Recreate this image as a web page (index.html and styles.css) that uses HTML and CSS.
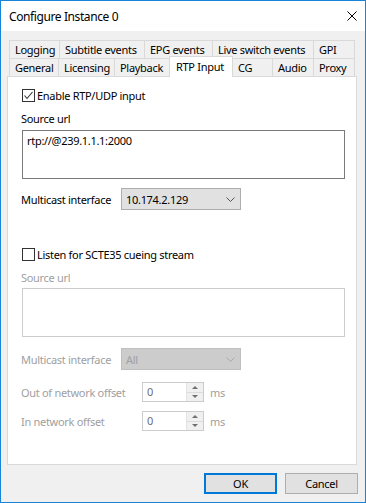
FILE: index.html
```html
<!DOCTYPE html>
<html lang="en">
<head>
  <meta charset="UTF-8">
  <title>Configure Instance 0</title>
  <link rel="stylesheet" href="styles.css">
</head>
<body>
  <div class="window">
    <div class="titlebar">
      <span class="title">Configure Instance 0</span>
      <svg class="close" width="10" height="10" viewBox="0 0 10 10">
        <path d="M0.5 0.5 L9.5 9.5 M9.5 0.5 L0.5 9.5" stroke="#000" stroke-width="1" fill="none"/>
      </svg>
    </div>

    <div class="dialog">
      <div class="tabs">
        <div class="tab-row row-top">
          <div class="tab">Logging</div>
          <div class="tab">Subtitle events</div>
          <div class="tab">EPG events</div>
          <div class="tab">Live switch events</div>
          <div class="tab">GPI</div>
        </div>
        <div class="tab-row row-bottom">
          <div class="tab">General</div>
          <div class="tab">Licensing</div>
          <div class="tab">Playback</div>
          <div class="tab active">RTP Input</div>
          <div class="tab">CG</div>
          <div class="tab">Audio</div>
          <div class="tab">Proxy</div>
        </div>
      </div>

      <div class="panel">
        <div class="check-row">
          <span class="checkbox">
            <svg width="11" height="11" viewBox="0 0 11 11">
              <path d="M1.5 5.5 L4 8.5 L9.5 2" stroke="#333" stroke-width="1.1" fill="none"/>
            </svg>
          </span>
          <span>Enable RTP/UDP input</span>
        </div>

        <div class="field-label url-label">Source url</div>
        <div class="textbox">rtp://@239.1.1.1:2000</div>

        <div class="field-row iface-row">
          <span class="row-label">Multicast interface</span>
          <div class="combo">
            <span>10.174.2.129</span>
            <svg width="9" height="5" viewBox="0 0 9 5">
              <path d="M0.5 0.5 L4.5 4.5 L8.5 0.5" stroke="#555" stroke-width="1" fill="none"/>
            </svg>
          </div>
        </div>

        <div class="check-row scte-row">
          <span class="checkbox"></span>
          <span>Listen for SCTE35 cueing stream</span>
        </div>

        <div class="field-label url-label-2 disabled">Source url</div>
        <div class="textbox disabled"></div>

        <div class="field-row iface-row-2 disabled">
          <span class="row-label">Multicast interface</span>
          <div class="combo disabled">
            <span>All</span>
            <svg width="9" height="5" viewBox="0 0 9 5">
              <path d="M0.5 0.5 L4.5 4.5 L8.5 0.5" stroke="#a8a8a8" stroke-width="1" fill="none"/>
            </svg>
          </div>
        </div>

        <div class="field-row offset-row disabled">
          <span class="offset-label">Out of network offset</span>
          <div class="spin">
            <span class="spin-value">0</span>
            <div class="spin-buttons">
              <div class="spin-up"></div>
              <div class="spin-down"></div>
            </div>
          </div>
          <span class="unit">ms</span>
        </div>

        <div class="field-row offset-row-2 disabled">
          <span class="offset-label">In network offset</span>
          <div class="spin">
            <span class="spin-value">0</span>
            <div class="spin-buttons">
              <div class="spin-up"></div>
              <div class="spin-down"></div>
            </div>
          </div>
          <span class="unit">ms</span>
        </div>
      </div>

      <div class="buttons">
        <div class="button default">OK</div>
        <div class="button">Cancel</div>
      </div>
    </div>
  </div>
</body>
</html>
```

FILE: styles.css
```css
* { box-sizing: border-box; }
body { margin: 0; font-family: "Noto Sans", sans-serif; font-size: 11px; letter-spacing: -0.3px; color: #000; white-space: nowrap; }

.window { width: 366px; height: 503px; border: 1px solid #1883d7; background: #f0f0f0; display: flex; flex-direction: column; }
.titlebar { flex: none; height: 30px; background: #fff; display: flex; align-items: center; justify-content: space-between; padding: 0 8px 0 8px; }
.title { font-size: 12px; letter-spacing: -0.4px; }
.close { display: block; }

.dialog { flex: 1; display: flex; flex-direction: column; padding: 9px 8px 8px 6px; }

.tabs { margin-left: 2px; position: relative; z-index: 1; }
.tab-row { display: grid; height: 18px; }
.row-top { grid-template-columns: 50px 85px 68px 101px 42px; }
.row-bottom { grid-template-columns: 49px 56px 55px 63px 40px 41px 42px; }
.tab { border-top: 1px solid #d9d9d9; border-left: 1px solid #d9d9d9; padding-left: 5px; line-height: 17px; }
.tab:last-child { border-right: 1px solid #d9d9d9; }
.tab.active { background: #fff; margin: -2px -1px -1px 0; padding-left: 6px; border-right: 1px solid #d9d9d9; line-height: 19px; position: relative; }

.panel { flex: 1; background: #fff; border: 1px solid #d9d9d9; padding: 12px 0 0 13px; }

.check-row { display: flex; align-items: center; gap: 2px; height: 13px; margin-left: 1px; }
.checkbox { width: 13px; height: 13px; border: 1px solid #333; display: flex; align-items: center; justify-content: center; }
.scte-row { margin-top: 38px; }

.field-label { line-height: 16px; height: 16px; }
.url-label { margin-top: 9px; }
.url-label-2 { margin-top: 9px; }
.textbox { width: 323px; height: 49px; margin: 3px 0 0 1px; border: 1px solid #7a7a7a; padding: 2px 4px; line-height: 16px; }
.textbox.disabled { border-color: #cccccc; margin-top: 2px; }

.field-row { display: flex; align-items: center; }
.row-label { width: 100px; }
.iface-row { margin-top: 9px; }
.iface-row-2 { margin-top: 11px; }
.combo { width: 120px; height: 22px; background: #e1e1e1; border: 1px solid #adadad; display: flex; align-items: center; justify-content: space-between; padding: 0 5px 0 4px; }
.combo.disabled { background: #cccccc; border-color: #bfbfbf; }

.disabled { color: #a0a0a0; }

.offset-row { margin-top: 12px; }
.offset-row-2 { margin-top: 9px; }
.offset-label { width: 121px; }
.spin { width: 62px; height: 20px; border: 1px solid #cccccc; display: flex; background: #fff; }
.spin-value { flex: 1; padding-left: 4px; line-height: 18px; color: #6d6d6d; }
.spin-buttons { width: 17px; display: flex; flex-direction: column; border-left: 1px solid #e3e3e3; background: #f0f0f0; }
.spin-up, .spin-down { flex: 1; display: flex; align-items: center; justify-content: center; }
.spin-up { border-bottom: 1px solid #dcdcdc; }
.spin-up::after { content: ""; border: 3px solid transparent; border-bottom: 3px solid #707070; border-top: 0; }
.spin-down::after { content: ""; border: 3px solid transparent; border-top: 3px solid #707070; border-bottom: 0; }
.unit { margin-left: 6px; }

.buttons { flex: none; display: flex; justify-content: flex-end; gap: 8px; margin: 8px -1px 0 0; }
.button { width: 73px; height: 21px; background: #e1e1e1; border: 1px solid #adadad; display: flex; align-items: center; justify-content: center; }
.button.default { border: 2px solid #0078d7; }
```
